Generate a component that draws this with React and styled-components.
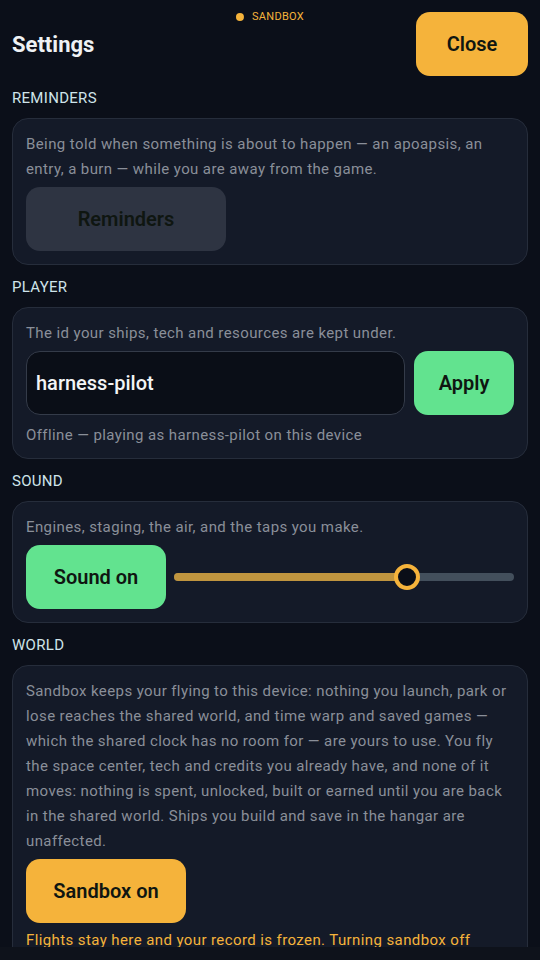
import React from "react";
import styled, { createGlobalStyle } from "styled-components";

const Global = createGlobalStyle`
  html, body { margin: 0; padding: 0; background: #0e121b; }
  body { font-family: Roboto, "Noto Sans", sans-serif; }
  * { box-sizing: border-box; }
`;

const Page = styled.div`
  height: 960px;
  display: flex;
  flex-direction: column;
  background: #0e121b;
`;

const Scroll = styled.div`
  position: relative;
  height: 947px;
  overflow: hidden;
  background: #0b0f19;
  padding: 12px 12px 40px;
  display: flex;
  flex-direction: column;
  gap: 12px;
`;

const Header = styled.div`
  display: flex;
  align-items: center;
  justify-content: space-between;
  height: 64px;
`;

const Title = styled.h1`
  margin: 0;
  font-size: 22px;
  font-weight: 700;
  color: #eef1f4;
`;

const Badge = styled.div`
  position: absolute;
  top: 10px;
  left: 50%;
  transform: translateX(-50%);
  display: flex;
  align-items: center;
  gap: 8px;
  font-size: 11px;
  color: #f5b33b;
  letter-spacing: 0.3px;
`;

const Dot = styled.span`
  width: 8px;
  height: 8px;
  border-radius: 50%;
  background: #f5b33b;
`;

const Button = styled.button`
  height: 64px;
  width: ${(p) => p.$w}px;
  border: none;
  border-radius: 14px;
  font-family: inherit;
  font-size: 20px;
  font-weight: 600;
  color: #0f1611;
  flex-shrink: 0;
  background: ${(p) =>
    p.$tone === "amber" ? "#f5b33b" : p.$tone === "green" ? "#62e38f" : "#2e3442"};
`;

const Section = styled.section`
  display: flex;
  flex-direction: column;
  gap: 10px;
`;

const Label = styled.div`
  font-size: 15px;
  line-height: 20px;
  color: #cfe4ea;
  letter-spacing: 0.3px;
`;

const Card = styled.div`
  background: #141a28;
  border: 1px solid #262d3b;
  border-radius: 16px;
  padding: 13px 13px ${(p) => p.$pb || 13}px;
  display: flex;
  flex-direction: column;
  gap: 5px;
`;

const Text = styled.p`
  margin: ${(p) => (p.$mt ? `${p.$mt}px 0 0` : 0)};
  font-size: 15px;
  line-height: 25px;
  letter-spacing: 0.4px;
  color: ${(p) => (p.$warn ? "#f5b33b" : "#8a8f99")};
`;

const Row = styled.div`
  display: flex;
  align-items: center;
  gap: 9px;
`;

const Input = styled.input`
  flex: 1;
  min-width: 0;
  height: 64px;
  background: #0a0e17;
  border: 1px solid #343b49;
  border-radius: 14px;
  padding: 0 9px;
  font-family: inherit;
  font-size: 20px;
  font-weight: 500;
  color: #f2f4f6;
  outline: none;
`;

const Slider = styled.div`
  position: relative;
  flex: 1;
  height: 8px;
  margin-left: -1px;
  border-radius: 4px;
  background: #434f5c;
`;

const Fill = styled.div`
  height: 100%;
  border-radius: 4px;
  background: #c0953f;
`;

const Thumb = styled.div`
  position: absolute;
  top: 50%;
  width: 26px;
  height: 26px;
  border-radius: 50%;
  border: 4px solid #f5b33b;
  background: #0a0e17;
  transform: translate(-50%, -50%);
`;

export default function App() {
  const vol = 0.685;
  return (
    <Page>
      <Global />
      <Scroll>
        <Badge>
          <Dot />
          SANDBOX
        </Badge>
        <Header>
          <Title>Settings</Title>
          <Button $tone="amber" $w={112}>Close</Button>
        </Header>

        <Section>
          <Label>REMINDERS</Label>
          <Card>
            <Text>
              Being told when something is about to happen — an apoapsis, an entry, a burn — while
              you are away from the game.
            </Text>
            <Row>
              <Button $w={200}>Reminders</Button>
            </Row>
          </Card>
        </Section>

        <Section>
          <Label>PLAYER</Label>
          <Card $pb={10}>
            <Text>The id your ships, tech and resources are kept under.</Text>
            <Row>
              <Input defaultValue="harness-pilot" />
              <Button $tone="green" $w={100}>Apply</Button>
            </Row>
            <Text $mt={3}>Offline — playing as harness-pilot on this device</Text>
          </Card>
        </Section>

        <Section>
          <Label>SOUND</Label>
          <Card>
            <Text>Engines, staging, the air, and the taps you make.</Text>
            <Row>
              <Button $tone="green" $w={140}>Sound on</Button>
              <Slider>
                <Fill style={{ width: `${vol * 100}%` }} />
                <Thumb style={{ left: `${vol * 100}%` }} />
              </Slider>
            </Row>
          </Card>
        </Section>

        <Section>
          <Label>WORLD</Label>
          <Card>
            <Text>
              Sandbox keeps your flying to this device: nothing you launch, park or lose reaches the
              shared world, and time warp and saved games — which the shared clock has no room for —
              are yours to use. You fly the space center, tech and credits you already have, and
              none of it moves: nothing is spent, unlocked, built or earned until you are back in the
              shared world. Ships you build and save in the hangar are unaffected.
            </Text>
            <Row>
              <Button $tone="amber" $w={160}>Sandbox on</Button>
            </Row>
            <Text $warn>
              Flights stay here and your record is frozen. Turning sandbox off brings you back to
              the shared world.
            </Text>
          </Card>
        </Section>
      </Scroll>
    </Page>
  );
}
